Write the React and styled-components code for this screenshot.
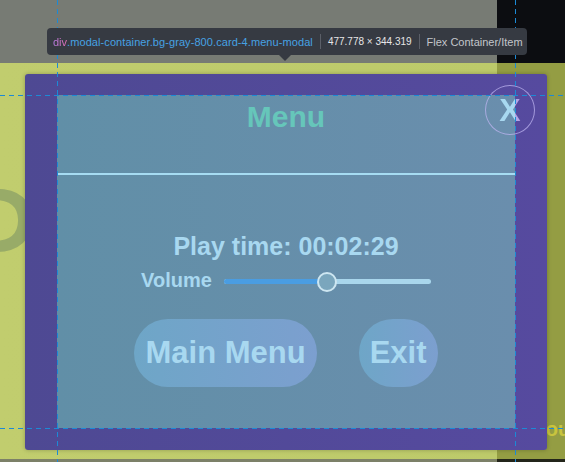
import React from 'react'
import styled, { createGlobalStyle } from 'styled-components'

const GlobalStyle = createGlobalStyle`
  html, body {
    margin: 0;
    padding: 0;
  }
  body {
    font-family: "Liberation Sans", Arial, sans-serif;
    background: #767a74;
  }
`

const Screen = styled.div`
  position: relative;
  width: 565px;
  height: 462px;
  overflow: hidden;
  display: flex;
  flex-direction: column;
`

// page behind the modal
const Band = styled.div`
  display: flex;
  flex: ${props => (props.grow ? '1 1 auto' : `0 0 ${props.h}px`)};
  min-height: 0;
`

const Cell = styled.div`
  flex: ${props => (props.side ? '0 0 68px' : '1 1 auto')};
  background: ${props => props.bg};
  overflow: hidden;
  box-sizing: border-box;
`

const BigLetter = styled.div`
  margin: 102px 0 0 -60px;
  font-size: 150px;
  line-height: 1;
  color: #98ab68;
`

const SideText = styled.div`
  margin: 355px 0 0 37px;
  font-size: 20px;
  font-weight: 700;
  color: #c8c43e;
  white-space: nowrap;
`

// modal
const Modal = styled.div`
  position: absolute;
  left: 25px;
  top: 74px;
  width: 522px;
  height: 376px;
  box-sizing: border-box;
  padding: 21px 32px 22px;
  border-radius: 3px;
  background: linear-gradient(90deg, #4e4993, #564a9f);
  box-shadow: 0 0 4px rgba(0, 0, 0, 0.25);
`

const Content = styled.div`
  height: 100%;
  display: flex;
  flex-direction: column;
  align-items: center;
  background: linear-gradient(90deg, #618fa7, #6a8ead);
`

const Header = styled.div`
  align-self: stretch;
  padding: 5px 0 39px;
  border-bottom: 2px solid #a6dcf2;
  text-align: center;
`

const Title = styled.h2`
  margin: 0;
  font-size: 30px;
  font-weight: 700;
  color: #66c6ba;
`

const CloseButton = styled.button`
  position: absolute;
  top: 11px;
  right: 12px;
  width: 50px;
  height: 50px;
  padding: 0;
  border-radius: 50%;
  border: 1px solid rgba(190, 180, 240, 0.75);
  background: transparent;
  font-family: "Liberation Sans", Arial, sans-serif;
  font-size: 32px;
  font-weight: 700;
  line-height: 1;
  color: transparent;
  background-image: linear-gradient(90deg, #a8d8f0 60%, #b4a6e6 60%);
  -webkit-background-clip: text;
  background-clip: text;
`

const PlayTime = styled.div`
  margin-top: 57px;
  font-size: 25px;
  font-weight: 700;
  color: #a8d8f0;
`

const VolumeRow = styled.div`
  margin-top: 8px;
  display: flex;
  align-items: center;
  gap: 12px;
`

const Label = styled.span`
  font-size: 20px;
  font-weight: 700;
  color: #a8d8f0;
`

const Track = styled.div`
  position: relative;
  width: 207px;
  height: 5px;
  margin-top: 2px;
  border-radius: 3px;
  background: #a9d6ec;
`

const Fill = styled.div`
  height: 100%;
  border-radius: 3px;
  background: #4a9de2;
`

const Thumb = styled.div`
  position: absolute;
  top: 50%;
  width: 20px;
  height: 20px;
  box-sizing: border-box;
  border-radius: 50%;
  border: 2px solid #cde6f1;
  background: #7aa6bd;
  transform: translate(-50%, -50%);
`

const ButtonRow = styled.div`
  margin-top: 27px;
  display: flex;
  gap: 42px;
`

const PillButton = styled.button`
  height: 68px;
  padding: 0 11px;
  border: none;
  border-radius: 34px;
  background: linear-gradient(90deg, #6ea6c7, #7c9fcf);
  font-family: "Liberation Sans", Arial, sans-serif;
  font-size: 31px;
  font-weight: 700;
  color: #a8d8f0;
`

// devtools overlay
const GuideH = styled.div`
  position: absolute;
  left: 0;
  right: 0;
  top: ${props => props.y}px;
  height: 1px;
  background: repeating-linear-gradient(90deg, #1c8ad6 0 5px, transparent 5px 9px);
`

const GuideV = styled.div`
  position: absolute;
  top: 0;
  bottom: 0;
  left: ${props => props.x}px;
  width: 1px;
  background: repeating-linear-gradient(180deg, #1c8ad6 0 5px, transparent 5px 9px);
`

const Tooltip = styled.div`
  position: absolute;
  left: 47px;
  top: 28px;
  width: 480px;
  height: 27px;
  box-sizing: border-box;
  padding: 0 6px;
  display: flex;
  align-items: center;
  gap: 7px;
  border-radius: 4px;
  background: #363a42;
  font-family: "Liberation Sans", Arial, sans-serif;
  font-size: 11px;
  white-space: nowrap;

  &::after {
    content: "";
    position: absolute;
    left: 232px;
    bottom: -6px;
    border-left: 6px solid transparent;
    border-right: 6px solid transparent;
    border-top: 6px solid #363a42;
  }
`

const Tag = styled.span`
  background: linear-gradient(90deg, #b77ee6, #e46fb4);
  -webkit-background-clip: text;
  background-clip: text;
  color: transparent;
`

const Selector = styled.span`
  color: #46a2e4;
  letter-spacing: 0.08px;
`

const Sep = styled.span`
  flex: 0 0 1px;
  height: 15px;
  background: #5b5f68;
`

const Info = styled.span`
  color: ${props => props.color};
  font-size: ${props => (props.small ? '10px' : '11px')};
`

export default function App() {
  const volume = 0.5
  return (
    <>
      <GlobalStyle />
      <Screen>
        <Band h={63}>
          <Cell bg="#777b74" />
          <Cell side bg="#0c0d11" />
        </Band>
        <Band grow>
          <Cell bg="linear-gradient(90deg, #c1cd6e, #bdca6a)">
            <BigLetter>P</BigLetter>
          </Cell>
          <Cell side bg="#949d43">
            <SideText>You</SideText>
          </Cell>
        </Band>
        <Band h={3}>
          <Cell bg="#7c8068" />
          <Cell side bg="#23251a" />
        </Band>

        <Modal>
          <Content>
            <Header>
              <Title>Menu</Title>
            </Header>
            <PlayTime>Play time: 00:02:29</PlayTime>
            <VolumeRow>
              <Label>Volume</Label>
              <Track role="slider" aria-valuenow={volume * 100}>
                <Fill style={{ width: `${volume * 100}%` }} />
                <Thumb style={{ left: `${volume * 100}%` }} />
              </Track>
            </VolumeRow>
            <ButtonRow>
              <PillButton>Main Menu</PillButton>
              <PillButton>Exit</PillButton>
            </ButtonRow>
          </Content>
          <CloseButton>X</CloseButton>
        </Modal>

        <GuideH y={95} />
        <GuideH y={428} />
        <GuideV x={57} />
        <GuideV x={515} />

        <Tooltip>
          <span>
            <Tag>div</Tag>
            <Selector>.modal-container.bg-gray-800.card-4.menu-modal</Selector>
          </span>
          <Sep />
          <Info color="#e6e6e6" small>477.778 × 344.319</Info>
          <Sep />
          <Info color="#c3c6cb">Flex Container/Item</Info>
        </Tooltip>
      </Screen>
    </>
  )
}
